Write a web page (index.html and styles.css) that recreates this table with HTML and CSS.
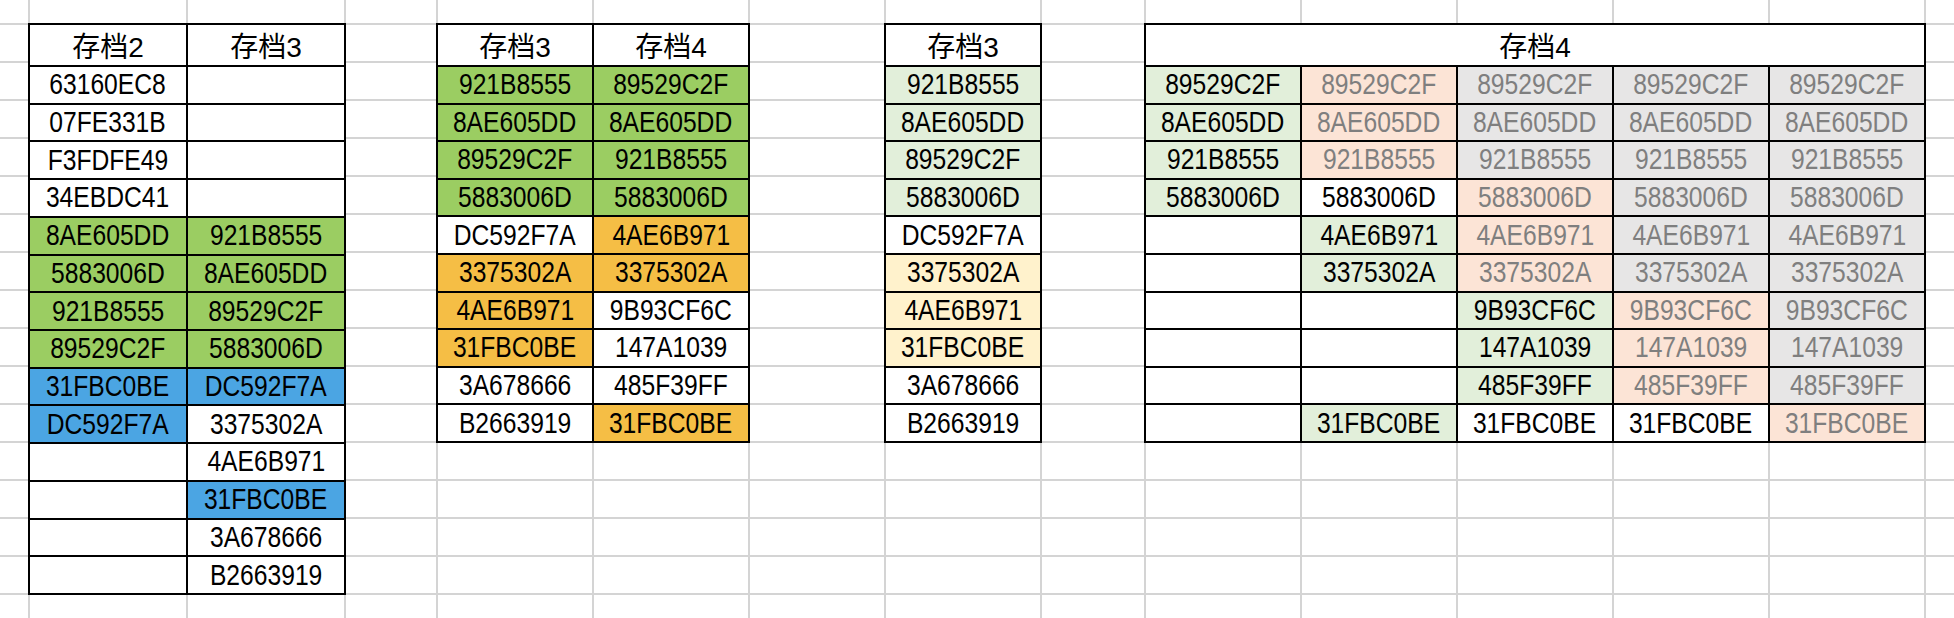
FILE: index.html
```html
<!DOCTYPE html>
<html lang="zh-CN">
<head>
<meta charset="utf-8">
<title>存档对比</title>
<link rel="stylesheet" href="styles.css">
</head>
<body>
<div class="sheet">
  <div class="tbl t1">
    <div class="c h">存档2</div><div class="c h">存档3</div>
    <div class="c"><span>63160EC8</span></div><div class="c"></div>
    <div class="c"><span>07FE331B</span></div><div class="c"></div>
    <div class="c"><span>F3FDFE49</span></div><div class="c"></div>
    <div class="c"><span>34EBDC41</span></div><div class="c"></div>
    <div class="c g"><span>8AE605DD</span></div><div class="c g"><span>921B8555</span></div>
    <div class="c g"><span>5883006D</span></div><div class="c g"><span>8AE605DD</span></div>
    <div class="c g"><span>921B8555</span></div><div class="c g"><span>89529C2F</span></div>
    <div class="c g"><span>89529C2F</span></div><div class="c g"><span>5883006D</span></div>
    <div class="c b"><span>31FBC0BE</span></div><div class="c b"><span>DC592F7A</span></div>
    <div class="c b"><span>DC592F7A</span></div><div class="c"><span>3375302A</span></div>
    <div class="c"></div><div class="c"><span>4AE6B971</span></div>
    <div class="c"></div><div class="c b"><span>31FBC0BE</span></div>
    <div class="c"></div><div class="c"><span>3A678666</span></div>
    <div class="c"></div><div class="c"><span>B2663919</span></div>
  </div>

  <div class="tbl t2">
    <div class="c h">存档3</div><div class="c h">存档4</div>
    <div class="c g"><span>921B8555</span></div><div class="c g"><span>89529C2F</span></div>
    <div class="c g"><span>8AE605DD</span></div><div class="c g"><span>8AE605DD</span></div>
    <div class="c g"><span>89529C2F</span></div><div class="c g"><span>921B8555</span></div>
    <div class="c g"><span>5883006D</span></div><div class="c g"><span>5883006D</span></div>
    <div class="c"><span>DC592F7A</span></div><div class="c o"><span>4AE6B971</span></div>
    <div class="c o"><span>3375302A</span></div><div class="c o"><span>3375302A</span></div>
    <div class="c o"><span>4AE6B971</span></div><div class="c"><span>9B93CF6C</span></div>
    <div class="c o"><span>31FBC0BE</span></div><div class="c"><span>147A1039</span></div>
    <div class="c"><span>3A678666</span></div><div class="c"><span>485F39FF</span></div>
    <div class="c"><span>B2663919</span></div><div class="c o"><span>31FBC0BE</span></div>
  </div>

  <div class="tbl t3">
    <div class="c h">存档3</div>
    <div class="c lg"><span>921B8555</span></div>
    <div class="c lg"><span>8AE605DD</span></div>
    <div class="c lg"><span>89529C2F</span></div>
    <div class="c lg"><span>5883006D</span></div>
    <div class="c"><span>DC592F7A</span></div>
    <div class="c ly"><span>3375302A</span></div>
    <div class="c ly"><span>4AE6B971</span></div>
    <div class="c ly"><span>31FBC0BE</span></div>
    <div class="c"><span>3A678666</span></div>
    <div class="c"><span>B2663919</span></div>
  </div>

  <div class="tbl t4">
    <div class="c h span-all">存档4</div>
    <div class="c lg"><span>89529C2F</span></div><div class="c pe"><span>89529C2F</span></div><div class="c gr"><span>89529C2F</span></div><div class="c gr"><span>89529C2F</span></div><div class="c gr"><span>89529C2F</span></div>
    <div class="c lg"><span>8AE605DD</span></div><div class="c pe"><span>8AE605DD</span></div><div class="c gr"><span>8AE605DD</span></div><div class="c gr"><span>8AE605DD</span></div><div class="c gr"><span>8AE605DD</span></div>
    <div class="c lg"><span>921B8555</span></div><div class="c pe"><span>921B8555</span></div><div class="c gr"><span>921B8555</span></div><div class="c gr"><span>921B8555</span></div><div class="c gr"><span>921B8555</span></div>
    <div class="c lg"><span>5883006D</span></div><div class="c"><span>5883006D</span></div><div class="c pe"><span>5883006D</span></div><div class="c gr"><span>5883006D</span></div><div class="c gr"><span>5883006D</span></div>
    <div class="c"></div><div class="c lg"><span>4AE6B971</span></div><div class="c pe"><span>4AE6B971</span></div><div class="c gr"><span>4AE6B971</span></div><div class="c gr"><span>4AE6B971</span></div>
    <div class="c"></div><div class="c lg"><span>3375302A</span></div><div class="c pe"><span>3375302A</span></div><div class="c gr"><span>3375302A</span></div><div class="c gr"><span>3375302A</span></div>
    <div class="c"></div><div class="c"></div><div class="c lg"><span>9B93CF6C</span></div><div class="c pe"><span>9B93CF6C</span></div><div class="c gr"><span>9B93CF6C</span></div>
    <div class="c"></div><div class="c"></div><div class="c lg"><span>147A1039</span></div><div class="c pe"><span>147A1039</span></div><div class="c gr"><span>147A1039</span></div>
    <div class="c"></div><div class="c"></div><div class="c lg"><span>485F39FF</span></div><div class="c pe"><span>485F39FF</span></div><div class="c gr"><span>485F39FF</span></div>
    <div class="c"></div><div class="c lg"><span>31FBC0BE</span></div><div class="c"><span>31FBC0BE</span></div><div class="c"><span>31FBC0BE</span></div><div class="c pe"><span>31FBC0BE</span></div>
  </div>
</div>
</body>
</html>
```
FILE: styles.css
```css
html, body {
  margin: 0;
  padding: 0;
  background: #fff;
}

.sheet {
  width: 1954px;
  height: 618px;
  overflow: hidden;
  display: grid;
  grid-template-columns: 28px 158px 158px 92px 156px 156px 136px 156px 104px 156px 156px 156px 156px 156px 30px;
  grid-template-rows: 23px repeat(15, 38px) 25px;
  font-family: "Liberation Sans", "Noto Sans CJK SC", sans-serif;
  font-size: 29px;
  color: #000;
  background-color: #fff;
  background-image:
    repeating-linear-gradient(to bottom, #d4d4d4 0 2px, transparent 2px 38px),
    linear-gradient(to right,
      transparent 28px, #d4d4d4 28px 30px,
      transparent 30px 186px, #d4d4d4 186px 188px,
      transparent 188px 344px, #d4d4d4 344px 346px,
      transparent 346px 436px, #d4d4d4 436px 438px,
      transparent 438px 592px, #d4d4d4 592px 594px,
      transparent 594px 748px, #d4d4d4 748px 750px,
      transparent 750px 884px, #d4d4d4 884px 886px,
      transparent 886px 1040px, #d4d4d4 1040px 1042px,
      transparent 1042px 1144px, #d4d4d4 1144px 1146px,
      transparent 1146px 1300px, #d4d4d4 1300px 1302px,
      transparent 1302px 1456px, #d4d4d4 1456px 1458px,
      transparent 1458px 1612px, #d4d4d4 1612px 1614px,
      transparent 1614px 1768px, #d4d4d4 1768px 1770px,
      transparent 1770px 1924px, #d4d4d4 1924px 1926px,
      transparent 1926px);
  background-position: 0 23px, 0 0;
  background-size: 100% 38px, 100% 100%;
  background-repeat: repeat-y, no-repeat;
}

.tbl {
  display: grid;
  gap: 2px;
  background: #000;
  border: 2px solid #000;
  margin-right: -2px;
  margin-bottom: -2px;
}

.t1 {
  grid-column: 2 / 4;
  grid-row: 2 / 17;
  grid-template-columns: repeat(2, 1fr);
  grid-template-rows: repeat(15, 1fr);
}

.t2 {
  grid-column: 5 / 7;
  grid-row: 2 / 13;
  grid-template-columns: repeat(2, 1fr);
  grid-template-rows: repeat(11, 1fr);
}

.t3 {
  grid-column: 8 / 9;
  grid-row: 2 / 13;
  grid-template-columns: 1fr;
  grid-template-rows: repeat(11, 1fr);
}

.t4 {
  grid-column: 10 / 15;
  grid-row: 2 / 13;
  grid-template-columns: repeat(5, 1fr);
  grid-template-rows: repeat(11, 1fr);
}

.c {
  display: flex;
  align-items: center;
  justify-content: center;
  background: #fff;
  white-space: nowrap;
}

.c span {
  display: inline-block;
  transform: scaleX(0.85);
}

.h {
  font-size: 28px;
}

.span-all {
  grid-column: 1 / -1;
}

.g  { background: #9bcd62; }
.b  { background: #4ba5e3; }
.o  { background: #f5be45; }
.lg { background: #e2efda; }
.ly { background: #fff2cc; }
.pe { background: #fce4d6; color: #7f7f7f; }
.gr { background: #e7e6e6; color: #7f7f7f; }
```
